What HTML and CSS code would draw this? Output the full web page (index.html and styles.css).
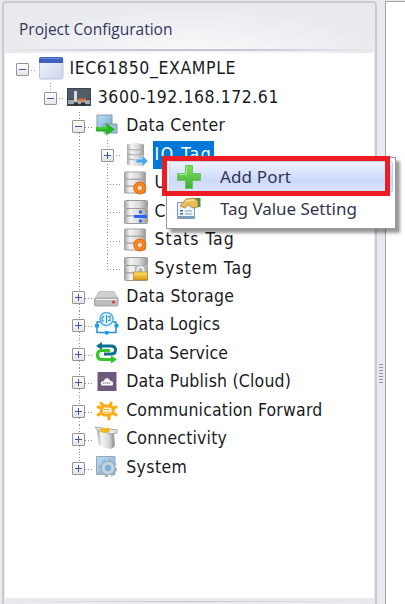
FILE: index.html
```
<!DOCTYPE html>
<html lang="en">
<head>
<meta charset="utf-8">
<title>Project Configuration</title>
<link rel="stylesheet" href="styles.css">
</head>
<body>
<svg class="defs" width="0" height="0">
  <defs>
    <linearGradient id="silver" x2="1" y2="0"><stop stop-color="#a5a5a5"/><stop offset=".25" stop-color="#f4f4f4"/><stop offset=".65" stop-color="#d8d8d8"/><stop offset="1" stop-color="#999"/></linearGradient>
    <linearGradient id="pane" x2="1" y2="1"><stop stop-color="#f4f6fd"/><stop offset="1" stop-color="#ccd3ec"/></linearGradient>
    <linearGradient id="sky" x2="1" y2="1"><stop stop-color="#b9ddf6"/><stop offset="1" stop-color="#79aed8"/></linearGradient>
    <linearGradient id="gold" x2="0" y2="1"><stop stop-color="#ffe36a"/><stop offset="1" stop-color="#d89a12"/></linearGradient>
    <linearGradient id="green" x2="0" y2="1"><stop stop-color="#7fe05c"/><stop offset="1" stop-color="#3fae3a"/></linearGradient>
    <symbol id="server" viewBox="0 0 24 24"><rect x=".5" y=".5" width="23" height="8" rx="1" fill="url(#silver)" stroke="#9c9c9c"/><rect x=".5" y="8.500" width="23" height="7.500" rx="1" fill="url(#silver)" stroke="#9c9c9c"/><rect x=".5" y="16" width="23" height="7.500" rx="1" fill="url(#silver)" stroke="#9c9c9c"/></symbol>
    <symbol id="ring" viewBox="0 0 14 14"><circle cx="7" cy="7" r="4.600" fill="#f8d8b0" stroke="#ef6a0c" stroke-width="4.200"/><circle cx="7" cy="7" r="4.500" fill="none" stroke="#ff9b32" stroke-width="1.300"/></symbol>
  </defs>
</svg>
<div class="app">
  <section class="panel">
    <header class="title"><span>Project Configuration</span></header>
    <div class="tree">
      <div class="row"><i class="g h"><b></b></i><svg class="ic" viewBox="0 0 24 24"><rect x=".5" y="1" width="23.500" height="21" rx="1.500" fill="url(#pane)" stroke="#bcc2dc"/><path d="M0 6V2q0-2 2-2h20q2 0 2 2v4z" fill="#3f5fbe"/><path d="M2 1.500h20" stroke="#6d8be0"/></svg><span class="t r0">IEC61850_EXAMPLE</span></div>
      <div class="row"><i class="g"></i><i class="g up h"><b></b></i><svg class="ic" viewBox="0 0 24 24"><path d="M0 2h24v18H0z" fill="#3c4650"/><path d="M1 3h22v10H1z" fill="#505d68"/><path d="M1 14h22v4H1z" fill="#a5a8aa"/><path d="M8.500 5v10" stroke="#d5dadd" stroke-width="3"/><path d="M11 13.500h8" stroke="#e8672b" stroke-width="2"/><path d="M7 18h4M14 18h4" stroke="#292e33" stroke-width="3"/></svg><span class="t r1">3600-192.168.172.61</span></div>
      <div class="row"><i class="g"></i><i class="g"></i><i class="g v h"><b></b></i><svg class="ic" viewBox="0 0 24 24"><path d="M1 1h15v14H1z" fill="url(#sky)" stroke="#8a98a6"/><path d="M8 10h13v9H8z" fill="#9bc3dd" stroke="#7d93a5"/><path d="M0 13h10V9l9 6.500-9 6v-4H0z" fill="#27b61c"/><path d="M1 14h10" stroke="#6bdf4e"/></svg><span class="t r2">Data Center</span></div>
      <div class="row"><i class="g"></i><i class="g"></i><i class="g v"></i><i class="g v h"><b class="plus"></b></i><svg class="ic" viewBox="0 0 24 24"><path d="M3 1.500q8-2.500 17 0v20q-9 3-17 0z" fill="url(#silver)"/><path d="M3 6q8 2 17 0M3 11q8 2 17 0M3 16q8 2 17 0" fill="none" stroke="#aaa"/><path d="M12 16h6v-4l6 6-6 6v-4h-6z" fill="#4da9e4" stroke="#d8effd" stroke-width=".7"/></svg><span class="t sel r3">IO Tag</span></div>
      <div class="row"><i class="g"></i><i class="g"></i><i class="g v"></i><i class="g v h"></i><svg class="ic wide" viewBox="0 0 24 24"><use href="#server" width="22" height="23"/><use href="#ring" x="9" y="10" width="13.500" height="14"/></svg><span class="t">U</span></div>
      <div class="row"><i class="g"></i><i class="g"></i><i class="g v"></i><i class="g v h"></i><svg class="ic wide" viewBox="0 0 24 24"><use href="#server" width="24" height="24"/><path d="M10 16.500h13" stroke="#2864ff" stroke-width="3"/><circle cx="16.500" cy="12" r="1.700" fill="#2864ff"/><circle cx="16.500" cy="21" r="1.700" fill="#2864ff"/></svg><span class="t">C</span></div>
      <div class="row"><i class="g"></i><i class="g"></i><i class="g v"></i><i class="g v h"></i><svg class="ic wide" viewBox="0 0 24 24"><use href="#server" width="22" height="23"/><use href="#ring" x="9" y="10" width="13.500" height="14"/></svg><span class="t r6">Stats Tag</span></div>
      <div class="row"><i class="g"></i><i class="g"></i><i class="g v"></i><i class="g up h"></i><svg class="ic wide" viewBox="0 0 24 24"><use href="#server" width="24" height="24"/><path d="M11 8h12v8H11z" fill="#b5b5b5"/><path d="M13.500 16v-3q0-3 3-3t3 3v3" fill="none" stroke="#eee" stroke-width="2"/><path d="M9.500 15h14v8h-14z" fill="url(#gold)" stroke="#b58318" stroke-width=".7"/></svg><span class="t r7">System Tag</span></div>
      <div class="row"><i class="g"></i><i class="g"></i><i class="g v h"><b class="plus"></b></i><svg class="ic" viewBox="0 0 24 24"><path d="M3 6.500h15l4 7H-1z" fill="#d0d0d2" stroke="#aaa" stroke-width=".6"/><rect x="-1.500" y="13" width="23.500" height="8" rx="1" fill="#bdbdc0" stroke="#98989b" stroke-width=".8"/><path d="M0 14.500h21" stroke="#eee"/><circle cx="17.500" cy="17" r="1.500" fill="#d73842"/></svg><span class="t r8">Data Storage</span></div>
      <div class="row"><i class="g"></i><i class="g"></i><i class="g v h"><b class="plus"></b></i><svg class="ic" viewBox="0 0 24 24"><g fill="none" stroke="#258fd1" stroke-width="1.500"><circle cx="10.500" cy="6" r="6.500" fill="#e3f4fc" stroke="#58b0df"/><path d="M4 9H1v10.500h19V9h-3"/><path d="M8 3l-2 2v3h2M10.500 2v8M12 3.500h2v4h-2" stroke-width="1.100"/></g><path d="M-1 11h4v3.500h-4zM18.500 11h4v3.500h-4zM9 18h3.500v3.500H9z" fill="#159ee8"/></svg><span class="t r9">Data Logics</span></div>
      <div class="row"><i class="g"></i><i class="g"></i><i class="g v h"><b class="plus"></b></i><svg class="ic" viewBox="0 0 24 24"><path d="M4 4h11q4.500 0 4.500 4t-4.500 4H8" fill="none" stroke="#08708d" stroke-width="3"/><path d="M0 4l6-4v8z" fill="#08708d"/><path d="M14 8.500H6Q1.500 8.500 1.500 13T6 17.500h11" fill="none" stroke="#32c724" stroke-width="3.200"/><path d="M21 17.500l-6-4v8z" fill="#32c724"/></svg><span class="t r10">Data Service</span></div>
      <div class="row"><i class="g"></i><i class="g"></i><i class="g v h"><b class="plus"></b></i><svg class="ic" viewBox="0 0 24 24"><path d="M1.500 2h19v19h-19z" fill="#6c5a7e"/><path d="M5.500 15.500q-2-4 2-4.500 3.500-6 7 0 4 .5 2 4.500z" fill="#fff"/><path d="M7 13h8" stroke="#6c5a7e" stroke-width="1.200" stroke-dasharray="1.500 .5"/></svg><span class="t r11">Data Publish (Cloud)</span></div>
      <div class="row"><i class="g"></i><i class="g"></i><i class="g v h"><b class="plus"></b></i><svg class="ic" viewBox="0 0 24 24"><g fill="none" stroke="#fdaa10" stroke-width="3" stroke-linecap="round" stroke-linejoin="round"><path d="M5 4l3 3h6l1-3M14 7l3 2 3-1M2 8l4 1 1-2M6 9l-1 5-3 2M5 14l3 2h5v4M13 16l4-2V9M17 14l3 2"/></g><path d="M8 10.500h6M8 13h6" fill="none" stroke="#fdaa10" stroke-width="1"/></svg><span class="t r12">Communication Forward</span></div>
      <div class="row"><i class="g"></i><i class="g"></i><i class="g v h"><b class="plus"></b></i><svg class="ic" viewBox="0 0 24 24"><path d="M1 4h17l1 15-4 3q-7-1-12-4z" fill="url(#silver)"/><path d="M15.500 7h2.500v13l-2 1z" fill="#a2a2a2"/><path d="M-1 0l22 3v3l-6 1L1 3z" fill="#e4e4e0" stroke="#9b9b92" stroke-width=".8"/><path d="M5 1l9 0-1 4-6 1-3-3z" fill="#f1bb20"/></svg><span class="t r13">Connectivity</span></div>
      <div class="row"><i class="g"></i><i class="g"></i><i class="g up h"><b class="plus"></b></i><svg class="ic" viewBox="0 0 24 24"><path d="M.5.500h18.500v18H.5z" fill="url(#sky)" stroke="#9ba7b3"/><circle cx="12" cy="12" r="7.700" fill="none" stroke="#9fb5c8" stroke-width="3" stroke-dasharray="3 3.050"/><circle cx="12" cy="12" r="6.800" fill="#c3d3e1" stroke="#93abc0"/><circle cx="12" cy="12" r="2.800" fill="#6fb4e6" stroke="#8ba8c0"/></svg><span class="t r14">System</span></div>
    </div>
    <footer class="foot"></footer>
  </section>
  <div class="split"><div class="grip"></div></div>
  <main class="content"></main>
</div>
<div class="menu">
  <div class="item hot"><svg class="mi" viewBox="0 0 24 24"><path d="M8.500.5h7v8h8v7h-8v8h-7v-8h-8v-7h8z" fill="url(#green)" stroke="#6cc460"/><path d="M9.500 2v7.500H2" fill="none" stroke="#a7ec8d"/></svg><span class="m1">Add Port</span></div>
  <div class="item"><svg class="mi" viewBox="0 0 24 24"><path d="M.5 5.500h17v16H.5z" fill="#f0f6ff" stroke="#7d9abb"/><path d="M1 19h16v2.500H1z" fill="#7e9bb9"/><path d="M3 13h3v1.500H3zM3 16h3v1.500H3z" fill="#3d6b9f"/><path d="M8 14h7M8 17h7" stroke="#809cb9"/><path d="M18 1h5.500v9H18z" fill="#4d9350"/><path d="M3 9l6-7 8-1 4 3v6l-5 1-5-3-3 3-3-1z" fill="#e8bd59" stroke="#9b782c" stroke-width=".7"/><path d="M9 4l8-1" stroke="#ffe39c" stroke-width="1.500"/></svg><span class="m2">Tag Value Setting</span></div>
</div>
<div class="frame"></div>
</body>
</html>
```
FILE: styles.css
```
* { box-sizing: border-box; }
body {
  margin: 0;
  width: 405px;
  height: 604px;
  overflow: hidden;
  background: #e9eaee;
  font-family: "DejaVu Sans Condensed", "DejaVu Sans", sans-serif;
  font-stretch: condensed;
}
.defs { position: absolute; }
.app { display: flex; height: 604px; padding: 1px 0 0 2px; }
.panel {
  display: flex;
  flex-direction: column;
  width: 375px;
  border: 2px solid #c9cbd1;
  border-bottom: 0;
  border-radius: 4px 4px 0 0;
  padding: 0 1px;
}
.title {
  height: 50px;
  padding: 14px 0 0 14px;
  font: 15.500px/24px "Open Sans", sans-serif;
  color: #34365c;
  background:
    linear-gradient(90deg, #e9eaee, #c5c7cf 35%, #c5c7cf 65%, #e9eaee) 0 46px / 100% 2px no-repeat,
    radial-gradient(ellipse 190px 44px at 50% 48px, #f9f9fb, #e9eaee);
}
.tree { height: 545px; padding: 2px 0 0 3px; background: #fff; }
.row { display: flex; align-items: center; height: 28.470px; white-space: nowrap; }
.g {
  flex: none;
  display: flex;
  align-items: center;
  justify-content: center;
  width: 28.400px;
  height: 100%;
  --v: repeating-linear-gradient(#909090 0 1px, #fff 1px 3px);
  --h: repeating-linear-gradient(90deg, #909090 0 1px, #fff 1px 3px);
}
.v { background: var(--v) 14px 0 / 1px 100% no-repeat; }
.up { background: var(--v) 14px 0 / 1px 50% no-repeat; }
.h { background: var(--h) 14px 15px / 15px 1px no-repeat; }
.v.h { background: var(--v) 14px 0 / 1px 100% no-repeat, var(--h) 14px 15px / 15px 1px no-repeat; }
.up.h { background: var(--v) 14px 0 / 1px 55% no-repeat, var(--h) 14px 15px / 15px 1px no-repeat; }
.g b {
  width: 13px;
  height: 13px;
  margin-top: 1px;
  border: 1px solid #959595;
  border-radius: 1px;
  background:
    linear-gradient(#4058a8, #4058a8) center / 7px 1px no-repeat,
    linear-gradient(#fff, #e5e5e5);
}
.g b.plus {
  background:
    linear-gradient(#4058a8, #4058a8) center / 7px 1px no-repeat,
    linear-gradient(#4058a8, #4058a8) center / 1px 7px no-repeat,
    linear-gradient(#fff, #e5e5e5);
}
.ic { flex: none; width: 24px; height: 24px; margin: 0 4.500px 0 2.500px; overflow: visible; }
.ic.wide { margin: 0 5px 0 2px; }
.t { height: 28px; padding: 0 2px; font-size: 17.500px; line-height: 27px; color: #1b1b1f; }
.r0 { letter-spacing: .62px; }
.r1 { letter-spacing: .54px; }
.r2 { letter-spacing: .32px; }
.r3 { letter-spacing: 1.550px; }
.r6 { letter-spacing: .95px; }
.r7 { letter-spacing: .8px; }
.r8 { letter-spacing: .33px; }
.r9 { letter-spacing: .18px; }
.r10 { letter-spacing: .08px; }
.r11 { letter-spacing: .2px; }
.r12 { letter-spacing: .19px; }
.r13 { letter-spacing: .18px; }
.r14 { letter-spacing: .4px; }
.sel { background: #0078d7; color: #fff; }
.split { display: flex; align-items: center; justify-content: center; width: 8px; padding-top: 144px; }
.grip { width: 4px; height: 21px; background: repeating-linear-gradient(#94969c 0 1px, #e9eaee 1px 3px); }
.content { flex: 1; background: #fff; border-left: 1px solid #a3a5ae; border-top: 1px solid #a3a5ae; }
.foot { flex: 1; background: linear-gradient(90deg, #e9eaee, #c5c7cf 50%, #e9eaee) 0 3px / 100% 1px no-repeat; }
.menu {
  position: absolute;
  left: 166px;
  top: 157px;
  width: 230px;
  height: 72px;
  padding: 3px 2px;
  border: 1px solid #9698a3;
  background: #fff;
  box-shadow: 4px 4px 3px rgba(0, 0, 0, .4);
}
.item {
  display: flex;
  align-items: center;
  gap: 19px;
  height: 32px;
  padding-left: 8px;
  font: 17px/30px "Noto Sans", sans-serif;
  color: #34344e;
  white-space: nowrap;
}
.m1 { letter-spacing: .15px; margin-top: -1px; }
.m2 { letter-spacing: -.03px; }
.hot { border: 1px solid #c8cfe4; border-radius: 3px; padding-left: 7px; background: linear-gradient(#eef2ff, #cddafb 60%, #d9e4ff); }
.mi { width: 24px; height: 24px; }
.frame { position: absolute; left: 162px; top: 156px; width: 228px; height: 40px; border: 5px solid #ed1c24; }
```
